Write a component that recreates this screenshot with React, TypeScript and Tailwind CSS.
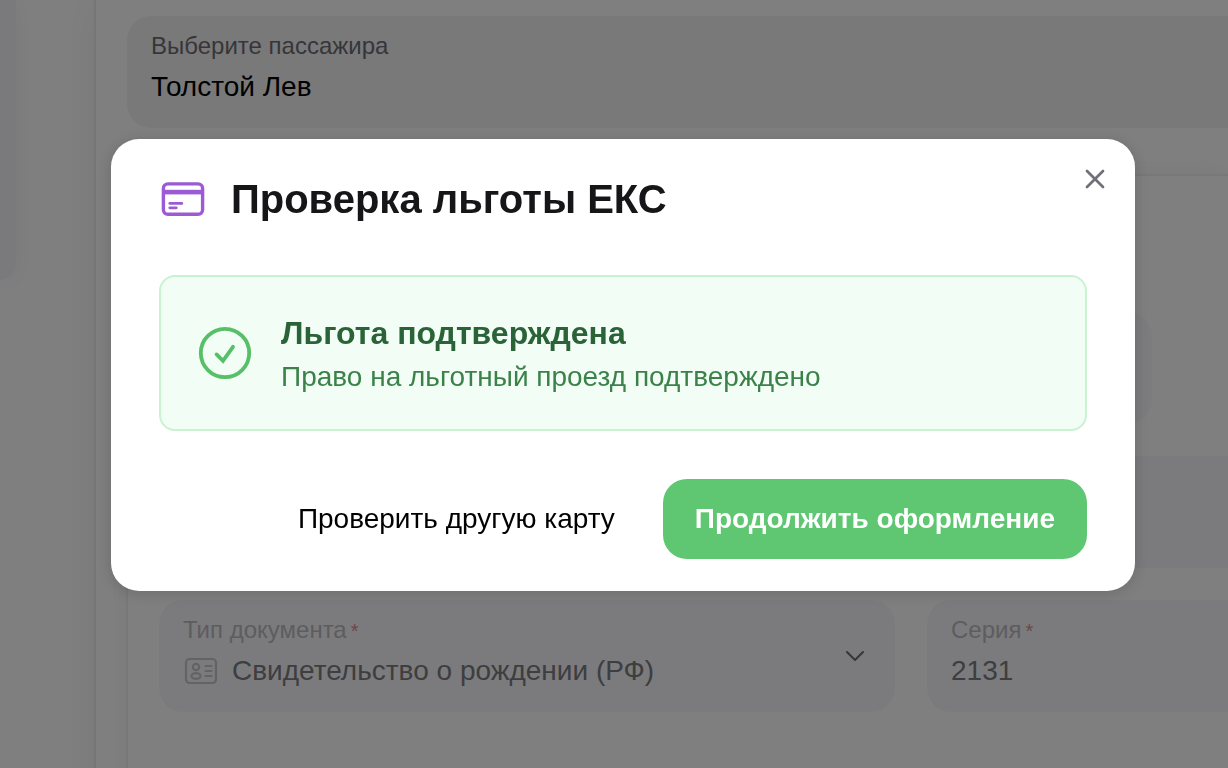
import React, { useState } from 'react';
import { X, ChevronDown } from 'lucide-react';

function CardIcon() {
  return (
    <svg viewBox="0 0 48 48" fill="none" className="size-12 shrink-0 text-[#9b5bd6]" aria-hidden="true">
      <rect x="4.4" y="8.9" width="39.2" height="30.4" rx="4.5" stroke="currentColor" strokeWidth="3.4" />
      <rect x="4" y="14.8" width="40" height="4.6" fill="currentColor" />
      <path d="M10.8 28.4h12M10.8 32.8h6.5" stroke="currentColor" strokeWidth="2.8" strokeLinecap="round" />
    </svg>
  );
}

function CheckIcon() {
  return (
    <svg viewBox="0 0 56 56" fill="none" className="size-14 shrink-0 text-[#56bf67]" aria-hidden="true">
      <circle cx="28" cy="28" r="24.2" stroke="currentColor" strokeWidth="3.8" />
      <path d="M19.6 29.4l6.4 6.4L36 21.8" stroke="currentColor" strokeWidth="3.8" strokeLinecap="round" strokeLinejoin="miter" />
    </svg>
  );
}

function DocumentIcon() {
  return (
    <svg viewBox="0 0 36 36" fill="none" stroke="currentColor" strokeWidth="2.2" strokeLinecap="round" className="size-9 shrink-0 text-[#c6c6ca]" aria-hidden="true">
      <rect x="3" y="6" width="30" height="24" rx="3.5" />
      <circle cx="13" cy="14" r="3.2" />
      <ellipse cx="13" cy="23" rx="4.6" ry="2.8" />
      <path d="M22.5 13h6M22.5 18h6M22.5 23h6" />
    </svg>
  );
}

function Required() {
  return <span className="ml-1 text-xl text-[#dc8c98]">*</span>;
}

export default function App() {
  const [isOpen, setIsOpen] = useState(true);
  const [docType, setDocType] = useState('birth');
  const [series, setSeries] = useState('2131');
  const [passenger, setPassenger] = useState('Толстой Лев');

  return (
    <div className="relative h-screen overflow-hidden bg-white font-['Liberation_Sans',Arial,sans-serif] text-black">
      <div className="flex min-h-full">
        <aside className="h-[280px] w-4 shrink-0 rounded-br-2xl bg-[#f5f5fb] shadow-[0_4px_24px_rgba(0,0,0,0.06)]" />

        <main className="ml-[78px] min-w-0 flex-1 border-l-2 border-[#ececec] pt-4 pl-[31px] shadow-[0_0_40px_rgba(0,0,0,0.06)]">
          <div className="flex h-28 flex-col gap-[3px] rounded-l-3xl bg-[#f3f3f3] px-6 pt-3">
            <label htmlFor="passenger" className="text-2xl leading-9 text-[#6d6d74]">Выберите пассажира</label>
            <input id="passenger" value={passenger} onChange={e => setPassenger(e.target.value)} className="w-full bg-transparent text-[28px] leading-10 text-black outline-none" />
          </div>

          <section className="-ml-px mt-[46px] h-screen border-t-2 border-l-2 border-[#f0f0f0] pl-[31px] shadow-[0_0_24px_rgba(0,0,0,0.05)]">
            <div className="flex flex-col gap-8 pt-[136px]">
              <div className="mr-[76px] h-28 rounded-3xl bg-[#f8f8fc]" />
              <div className="h-28 bg-[#f6f6fa]" />

              <div className="flex gap-8">
                <div className="relative flex h-28 w-[736px] shrink-0 flex-col gap-[3px] rounded-3xl bg-[#f7f7fa] px-6 pt-3">
                  <label htmlFor="docType" className="text-2xl leading-9 text-[#bababe]">
                    Тип документа<Required />
                  </label>
                  <div className="flex items-center gap-[13px]">
                    <DocumentIcon />
                    <select id="docType" value={docType} onChange={e => setDocType(e.target.value)} className="h-10 flex-1 appearance-none bg-transparent text-[28px] leading-10 text-[#7c7c80] outline-none">
                      <option value="birth">Свидетельство о рождении (РФ)</option>
                    </select>
                  </div>
                  <ChevronDown strokeWidth={1.5} className="pointer-events-none absolute top-10 right-6 size-8 text-[#6c6c70]" />
                </div>

                <div className="flex h-28 min-w-0 flex-1 flex-col gap-[3px] rounded-l-3xl bg-[#f7f7fa] px-6 pt-3">
                  <label htmlFor="series" className="text-2xl leading-9 text-[#bababe]">
                    Серия<Required />
                  </label>
                  <input id="series" value={series} onChange={e => setSeries(e.target.value)} className="w-full bg-transparent text-[28px] leading-10 text-[#7c7c80] outline-none" />
                </div>
              </div>
            </div>
          </section>
        </main>
      </div>

      {isOpen && (
        <div className="fixed inset-0 z-50 flex items-center justify-center bg-black/50 pr-0 pb-[38px] pl-[18px]">
          <div role="dialog" aria-modal="true" aria-labelledby="dialogTitle" className="relative w-full max-w-5xl rounded-[28px] bg-white p-12 pt-8 pb-8 shadow-[0_2px_16px_rgba(0,0,0,0.16)]">
            <button type="button" aria-label="Закрыть" onClick={() => setIsOpen(false)} className="absolute top-5 right-5 flex size-10 items-center justify-center text-[#707078]">
              <X strokeWidth={2} className="size-8" />
            </button>

            <div className="flex h-14 items-center gap-6">
              <CardIcon />
              <h2 id="dialogTitle" className="text-[40px] leading-14 font-bold text-[#161618]">Проверка льготы ЕКС</h2>
            </div>

            <div className="mt-12 flex items-center gap-7 rounded-2xl border-2 border-[#c9f2d3] bg-[#f1fdf5] px-9 py-[30px]">
              <CheckIcon />
              <div className="pt-1">
                <p className="text-[32px] leading-11 font-bold text-[#2a6337]">Льгота подтверждена</p>
                <p className="text-[28px] leading-11 text-[#3b8249]">Право на льготный проезд подтверждено</p>
              </div>
            </div>

            <div className="mt-12 flex justify-end gap-4">
              <button type="button" className="h-20 rounded-3xl px-8 text-[28px] text-black">Проверить другую карту</button>
              <button type="button" onClick={() => setIsOpen(false)} className="h-20 rounded-3xl bg-[#5fc672] px-8 text-[28px] font-bold text-white">Продолжить оформление</button>
            </div>
          </div>
        </div>
      )}
    </div>
  );
}
